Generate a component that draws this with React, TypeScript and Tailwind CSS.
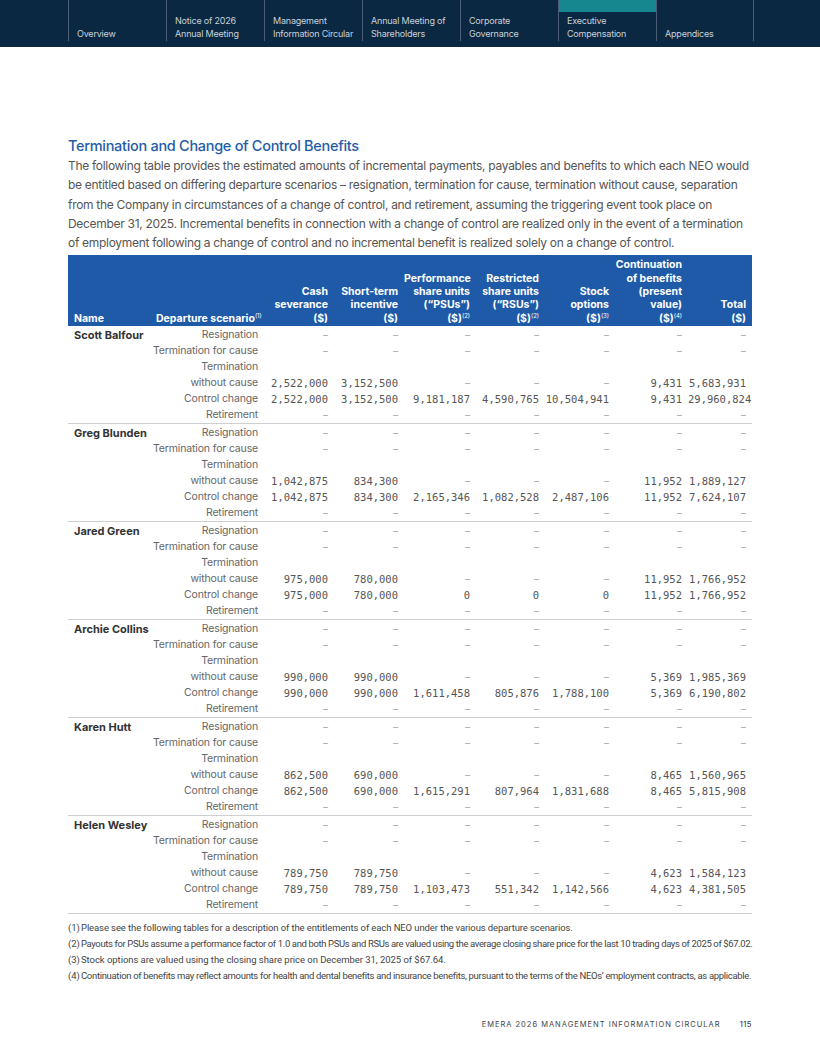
import React from "react";

const tabs: { l1?: string; l2: string; active?: boolean }[] = [
  { l2: "Overview" },
  { l1: "Notice of 2026", l2: "Annual Meeting" },
  { l1: "Management", l2: "Information Circular" },
  { l1: "Annual Meeting of", l2: "Shareholders" },
  { l1: "Corporate", l2: "Governance" },
  { l1: "Executive", l2: "Compensation", active: true },
  { l2: "Appendices" },
];

const D = "–";
type Row = string[];
const dashes: Row = [D, D, D, D, D, D, D];

const people: { name: string; wo: Row; cc: Row }[] = [
  {
    name: "Scott Balfour",
    wo: ["2,522,000", "3,152,500", D, D, D, "9,431", "5,683,931"],
    cc: ["2,522,000", "3,152,500", "9,181,187", "4,590,765", "10,504,941", "9,431", "29,960,824"],
  },
  {
    name: "Greg Blunden",
    wo: ["1,042,875", "834,300", D, D, D, "11,952", "1,889,127"],
    cc: ["1,042,875", "834,300", "2,165,346", "1,082,528", "2,487,106", "11,952", "7,624,107"],
  },
  {
    name: "Jared Green",
    wo: ["975,000", "780,000", D, D, D, "11,952", "1,766,952"],
    cc: ["975,000", "780,000", "0", "0", "0", "11,952", "1,766,952"],
  },
  {
    name: "Archie Collins",
    wo: ["990,000", "990,000", D, D, D, "5,369", "1,985,369"],
    cc: ["990,000", "990,000", "1,611,458", "805,876", "1,788,100", "5,369", "6,190,802"],
  },
  {
    name: "Karen Hutt",
    wo: ["862,500", "690,000", D, D, D, "8,465", "1,560,965"],
    cc: ["862,500", "690,000", "1,615,291", "807,964", "1,831,688", "8,465", "5,815,908"],
  },
  {
    name: "Helen Wesley",
    wo: ["789,750", "789,750", D, D, D, "4,623", "1,584,123"],
    cc: ["789,750", "789,750", "1,103,473", "551,342", "1,142,566", "4,623", "4,381,505"],
  },
];

const grid = "grid grid-cols-[82px_114px_70px_70px_72px_69px_70px_73px_64px]";

const sans = "font-['Inter','Liberation_Sans',sans-serif]";
const mono = "font-['DejaVu_Sans_Mono','Liberation_Mono',monospace]";

function Cells({ r }: { r: Row }) {
  return (
    <>
      {r.map((v, i) => (
        <div
          key={i}
          className={`pr-[6px] text-right self-end whitespace-nowrap ${
            v === D ? "text-[#a8a8a8] text-[10px] " + sans : "text-[#555] text-[10.5px] " + mono
          }`}
        >
          {v}
        </div>
      ))}
    </>
  );
}

function ScenarioRow({ name, label, r }: { name?: string; label: React.ReactNode; r: Row }) {
  return (
    <>
      <div className={`pl-[6px] font-bold text-[11px] text-[#333] whitespace-nowrap ${sans}`}>{name ?? ""}</div>
      <div className={`pr-[6px] text-right text-[10.5px] text-[#666] whitespace-nowrap tracking-[-0.15px] ${sans}`}>
        {label}
      </div>
      <Cells r={r} />
    </>
  );
}

function Sup({ children }: { children: React.ReactNode }) {
  return (
    <span className="relative top-[-4px] text-[6px] leading-none font-normal">{children}</span>
  );
}

const notes: { t: string; tr: string }[] = [
  {
    t: "Please see the following tables for a description of the entitlements of each NEO under the various departure scenarios.",
    tr: "tracking-[-0.1px]",
  },
  {
    t: "Payouts for PSUs assume a performance factor of 1.0 and both PSUs and RSUs are valued using the average closing share price for the last 10 trading days of 2025 of $67.02.",
    tr: "tracking-[-0.37px]",
  },
  {
    t: "Stock options are valued using the closing share price on December 31, 2025 of $67.64.",
    tr: "tracking-[-0.05px]",
  },
  {
    t: "Continuation of benefits may reflect amounts for health and dental benefits and insurance benefits, pursuant to the terms of the NEOs’ employment contracts, as applicable.",
    tr: "tracking-[-0.32px]",
  },
];

export default function App() {
  return (
    <div className={`w-[820px] h-[1061px] bg-white relative ${sans}`}>
      {/* Nav */}
      <div className="h-[47px] bg-[#0b2843] flex pl-[68px]">
        {tabs.map((t, i) => (
          <div
            key={i}
            className={`w-[98px] h-[41px] border-l border-[#4a5f75] flex flex-col ${
              i === tabs.length - 1 ? "border-r" : ""
            }`}
          >
            <div className={`h-[12px] ${t.active ? "bg-[#17878f]" : ""}`} />
            <div className="flex-1 flex flex-col justify-end pl-[8px] pb-[1px] text-[9px] leading-[13px] text-[#c9d1da] tracking-[-0.2px] whitespace-nowrap">
              {t.l1 && <div>{t.l1}</div>}
              <div>{t.l2}</div>
            </div>
          </div>
        ))}
      </div>

      <div className="px-[68px] pt-[89px]">
        <h1 className="text-[14.5px] leading-[20px] text-[#1f5ca8] font-medium tracking-[-0.3px]">
          Termination and Change of Control Benefits
        </h1>
        <div className="text-[12px] leading-[19.3px] text-[#555] tracking-[-0.3px]">
          <div className="whitespace-nowrap">
            The following table provides the estimated amounts of incremental payments, payables and benefits to which each NEO would
          </div>
          <div className="whitespace-nowrap">
            be entitled based on differing departure scenarios – resignation, termination for cause, termination without cause, separation
          </div>
          <div className="whitespace-nowrap">
            from the Company in circumstances of a change of control, and retirement, assuming the triggering event took place on
          </div>
          <div className="whitespace-nowrap">
            December 31, 2025. Incremental benefits in connection with a change of control are realized only in the event of a termination
          </div>
          <div className="whitespace-nowrap">
            of employment following a change of control and no incremental benefit is realized solely on a change of control.
          </div>
        </div>

        {/* Table */}
        <div className="mt-[3px]">
          <div
            className={`${grid} bg-[#1e5aa8] text-white font-bold text-[10.5px] leading-[13.3px] pt-[3px] pb-[1px] items-end`}
          >
            <div className="pl-[6px]">Name</div>
            <div className="pl-[6px] whitespace-nowrap">
              Departure scenario<Sup>(1)</Sup>
            </div>
            <div className="pr-[6px] text-right">
              Cash
              <br />
              severance
              <br />
              ($)
            </div>
            <div className="pr-[6px] text-right">
              Short-term
              <br />
              incentive
              <br />
              ($)
            </div>
            <div className="pr-[6px] text-right whitespace-nowrap">
              Performance
              <br />
              share units
              <br />
              (“PSUs”)
              <br />
              ($)<Sup>(2)</Sup>
            </div>
            <div className="pr-[6px] text-right whitespace-nowrap">
              Restricted
              <br />
              share units
              <br />
              (“RSUs”)
              <br />
              ($)<Sup>(2)</Sup>
            </div>
            <div className="pr-[6px] text-right">
              Stock
              <br />
              options
              <br />
              ($)<Sup>(3)</Sup>
            </div>
            <div className="pr-[6px] text-right whitespace-nowrap">
              Continuation
              <br />
              of benefits
              <br />
              (present
              <br />
              value)
              <br />
              ($)<Sup>(4)</Sup>
            </div>
            <div className="pr-[6px] text-right">
              Total
              <br />
              ($)
            </div>
          </div>

          {people.map((p) => (
            <div key={p.name} className={`${grid} leading-[16px] pt-[1px] border-b border-[#cfcfcf]`}>
              <ScenarioRow name={p.name} label="Resignation" r={dashes} />
              <ScenarioRow label="Termination for cause" r={dashes} />
              <ScenarioRow
                label={
                  <>
                    Termination
                    <br />
                    without cause
                  </>
                }
                r={p.wo}
              />
              <ScenarioRow label="Control change" r={p.cc} />
              <ScenarioRow label="Retirement" r={dashes} />
            </div>
          ))}
        </div>

        {/* Footnotes */}
        <div className="mt-[6px] text-[9.5px] leading-[16px] text-[#444] font-['Roboto','Liberation_Sans',sans-serif]">
          {notes.map((n, i) => (
            <div key={i} className="flex whitespace-nowrap">
              <span className="w-[13px] shrink-0">({i + 1})</span>
              <span className={n.tr}>{n.t}</span>
            </div>
          ))}
        </div>
      </div>

      {/* Footer */}
      <div className="absolute right-[68px] top-[1019px] flex items-center gap-[19px] text-[7.5px] text-[#444] tracking-[1px]">
        <span>EMERA 2026 MANAGEMENT INFORMATION CIRCULAR</span>
        <span className="tracking-[0.5px] font-medium">115</span>
      </div>
    </div>
  );
}
